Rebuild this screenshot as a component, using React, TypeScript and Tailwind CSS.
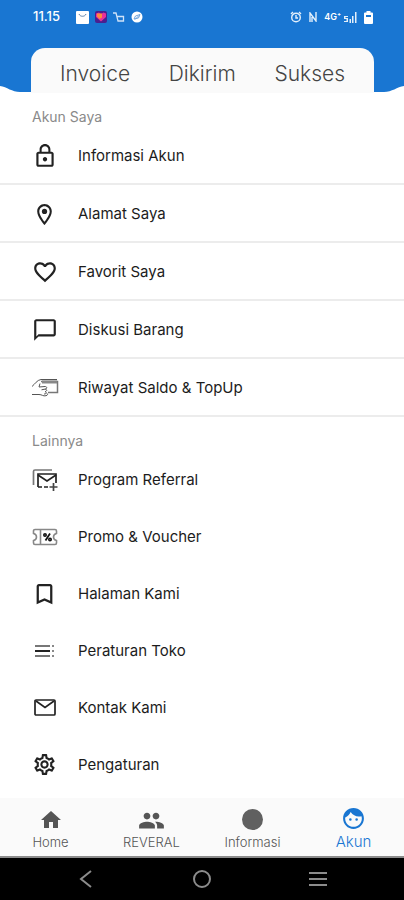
import type { ReactNode } from 'react';
import {
  MdBookmarkBorder,
  MdChatBubbleOutline,
  MdFace,
  MdFavoriteBorder,
  MdHome,
  MdLockOutline,
  MdOutlineLocationOn,
  MdOutlineSettings,
  MdPeople,
} from 'react-icons/md';

type Item = { label: string; icon: ReactNode };

function HandCardIcon() {
  return (
    <svg viewBox="0 0 28 20" className="w-7 h-5 shrink-0" fill="none" stroke="#555" strokeWidth="1">
      <path d="M10 3.500h16.500v11H17" stroke="#777" strokeWidth="1.500" />
      <path d="M11 4h15" stroke="#888" strokeWidth="3" />
      <path d="M1 8.500C4 6 6 2 10 1.500h16" />
      <path d="M9 5.500 8 9l6-.5c2 0 2.500 2 .5 2.500l-4 .8M14 11c2.500.5 2 2.500 0 2.500 2 .8 1.500 2.500-1 2.500M1 16.500h7c3 0 4 2 7 1.200 2-.5 2-2 .5-2.500" />
    </svg>
  );
}

function MailPlusIcon() {
  return (
    <svg viewBox="0 0 26 24" className="w-[26px] h-6 shrink-0" fill="none" stroke="#222" strokeWidth="1.700">
      <path d="M1.500 17V3.500a1.500 1.500 0 0 1 1.500-1.500H20" stroke="#777" />
      <path d="M6 19V6h18v9M6 19h4M12 19h4" />
      <path d="m6 7 9 6 9-6" />
      <path d="M21.500 15v8M17.500 19h8" stroke="#444" />
    </svg>
  );
}

function VoucherIcon() {
  return (
    <svg viewBox="0 0 26 18" className="w-[26px] h-[18px] shrink-0" fill="none" stroke="#888" strokeWidth="1.600">
      <path d="M3 1.500h20a1.500 1.500 0 0 1 1.500 1.500v2.500c-4 1-4 6 0 7V15a1.500 1.500 0 0 1-1.500 1.500H3A1.500 1.500 0 0 1 1.500 15v-2.500c4-1 4-6 0-7V3A1.500 1.500 0 0 1 3 1.500z" />
      <path d="M8.500 2v14" />
      <path d="m18 5.500-4.500 7" stroke="#111" strokeWidth="1.800" />
      <circle cx="13" cy="7" r="1.200" stroke="#111" />
      <circle cx="18" cy="11.500" r="1.200" stroke="#111" />
    </svg>
  );
}

function ListIcon() {
  return (
    <svg viewBox="0 0 20 14" className="w-5 h-[14px] shrink-0" fill="none" strokeWidth="2">
      <path d="M0 2h15M0 12h15" stroke="#777" />
      <path d="M0 7h15" stroke="#222" />
      <path d="M17 2h2M17 7h2M17 12h2" stroke="#888" />
    </svg>
  );
}

function EnvelopeIcon() {
  return (
    <svg viewBox="0 0 22 17" className="w-[22px] h-[17px] shrink-0" fill="none" stroke="#222" strokeWidth="1.700">
      <rect x="1" y="1" width="20" height="15" rx="1" />
      <path d="m2 2 9 6.500L20 2" />
    </svg>
  );
}

const account: Item[] = [
  { label: 'Informasi Akun', icon: <MdLockOutline size={26} /> },
  { label: 'Alamat Saya', icon: <MdOutlineLocationOn size={25} /> },
  { label: 'Favorit Saya', icon: <MdFavoriteBorder size={26} /> },
  { label: 'Diskusi Barang', icon: <MdChatBubbleOutline size={26} /> },
  { label: 'Riwayat Saldo & TopUp', icon: <HandCardIcon /> },
];

const others: Item[] = [
  { label: 'Program Referral', icon: <MailPlusIcon /> },
  { label: 'Promo & Voucher', icon: <VoucherIcon /> },
  { label: 'Halaman Kami', icon: <MdBookmarkBorder size={28} /> },
  { label: 'Peraturan Toko', icon: <ListIcon /> },
  { label: 'Kontak Kami', icon: <EnvelopeIcon /> },
  { label: 'Pengaturan', icon: <MdOutlineSettings size={25} /> },
];

function StatusBar() {
  return (
    <div className="flex items-center justify-between h-[34px] pl-[33px] pr-[31px] text-white">
      <div className="flex items-center">
        <span className="text-[13px] font-medium">11.15</span>
        <div className="flex items-center gap-[6px] ml-4">
          <svg viewBox="0 0 13 13" className="w-[13px] h-[13px]">
            <rect width="13" height="13" rx="1" fill="#fff" />
            <path d="M3 3c1 3 6 3 7 0" fill="none" stroke="#5b7fa8" />
          </svg>
          <svg viewBox="0 0 12 12" className="w-3 h-3">
            <rect width="12" height="12" rx="2" fill="#4a1f8f" />
            <path d="M6 10.500 1 6V2.500L4 1.500l2 1.500L8.500 1.500l2.500 1V6z" fill="#e8309a" />
            <path d="M2 2.500h5v4L4.500 8 2 5.500z" fill="#ff8a3d" />
          </svg>
          <svg viewBox="0 0 12 12" className="w-3 h-3" fill="none" stroke="#cfe2f8" strokeWidth="1.300">
            <path d="M0 2h3l2 8h5.500V5.500H4.500" />
          </svg>
          <svg viewBox="0 0 12 12" className="w-3 h-3">
            <circle cx="6" cy="6" r="5.500" fill="#fff" />
            <path d="m3 8 1.500-3L9 3.500 7.500 7zM4 8.500l4-4" fill="none" stroke="#6fa5de" />
          </svg>
        </div>
      </div>
      <div className="flex items-center gap-[7px]">
        <svg viewBox="0 0 12 12" className="w-3 h-3" fill="none" stroke="#e3effb" strokeWidth="1.400">
          <circle cx="6" cy="6.500" r="4.300" />
          <path d="M6 4v3h2M1 3l2-2M11 3 9 1" />
        </svg>
        <svg viewBox="0 0 8 10" className="w-2 h-[10px]" fill="none" stroke="#e3effb" strokeWidth="1.400">
          <path d="M1 10V1l6 8V0M3 10V5" />
        </svg>
        <span className="text-[9px] font-semibold">4G⁺</span>
        <svg viewBox="0 0 13 11" className="w-[13px] h-[11px] -ml-1" fill="#e3effb">
          <path d="M0 4h4v1H1.500v1H4v4H0V9h2.500V7H0zM5.500 7H7v4H5.500zM8 4h1.500v7H8zM11 0h1.500v11H11z" />
        </svg>
        <svg viewBox="0 0 9 13" className="w-[9px] h-[13px]">
          <path d="M2.500 0h4v1.500H8A1 1 0 0 1 9 2.500V12a1 1 0 0 1-1 1H1a1 1 0 0 1-1-1V2.500a1 1 0 0 1 1-1h1.500z" fill="#fff" />
          <path d="M2 4h5v2H2z" fill="#1976d2" />
        </svg>
      </div>
    </div>
  );
}

function Row({ item, divided }: { item: Item; divided?: boolean }) {
  return (
    <li>
      <button
        className={
          divided
            ? 'flex items-center w-full h-[58px] pt-[2px] pl-[31px] text-left border-b-2 border-[#ececec]'
            : 'flex items-center w-full h-[57px] pl-[31px] text-left'
        }
      >
        <span className="flex items-center justify-center w-[27px] text-[#222]">{item.icon}</span>
        <span className="ml-5 text-[15px] leading-5 text-[#1c1c1c]">{item.label}</span>
      </button>
    </li>
  );
}

export default function App() {
  return (
    <div className="flex flex-col min-h-screen bg-white font-[Inter,'Liberation_Sans',sans-serif]">
      <header className="relative bg-[#1976d2]">
        <StatusBar />
        {/* Curved lower corners of the header */}
        <svg viewBox="0 0 31 8" className="absolute left-0 bottom-0 w-[31px] h-2">
          <path d="M0 1c7 1 12 6 20 6h11v1H0z" fill="#fff" />
        </svg>
        <svg viewBox="0 0 31 8" className="absolute right-0 bottom-0 w-[31px] h-2">
          <path d="M31 1c-7 1-12 6-20 6H0v1h31z" fill="#fff" />
        </svg>
        <nav className="relative flex items-center justify-between h-[45px] mt-[14px] ml-[31px] mr-[30px] px-[29px] pt-[6px] rounded-t-[14px] bg-[#fafafa] text-[21px] leading-7 font-light text-[#444]">
          <a href="#invoice">Invoice</a>
          <a href="#dikirim">Dikirim</a>
          <a href="#sukses">Sukses</a>
        </nav>
      </header>

      <main className="flex-1">
        <section>
          <h2 className="pt-[14px] pl-8 text-sm leading-5 text-[#8a8a8a]">Akun Saya</h2>
          <ul>
            {account.map((item) => (
              <Row key={item.label} item={item} divided />
            ))}
          </ul>
        </section>
        <section>
          <h2 className="pt-[14px] pl-8 text-sm leading-5 text-[#8a8a8a]">Lainnya</h2>
          <ul>
            {others.map((item) => (
              <Row key={item.label} item={item} />
            ))}
          </ul>
        </section>
      </main>

      <footer>
        <nav className="grid grid-cols-4 h-[60px] bg-[#fafafa] border-b-2 border-[#8c8c8c] text-[13px] leading-4 font-light text-[#555]">
          <a href="#home" className="flex flex-col items-center pt-[10px]">
            <MdHome size={24} className="text-[#555]" />
            <span className="mt-[2px]">Home</span>
          </a>
          <a href="#reveral" className="flex flex-col items-center pt-[9px]">
            <MdPeople size={27} className="text-[#555]" />
            <span>REVERAL</span>
          </a>
          <a href="#informasi" className="flex flex-col items-center pt-[11px]">
            <span className="size-[21px] rounded-full bg-[#606060]" />
            <span className="mt-1">Informasi</span>
          </a>
          <a href="#akun" className="flex flex-col items-center pt-2 text-[15px] leading-4 text-[#1976d2]">
            <MdFace size={25} />
            <span className="mt-[3px]">Akun</span>
          </a>
        </nav>
        <div className="flex items-center justify-between h-[42px] pl-[78px] pr-[77px] bg-black text-[#8c8c8c]">
          <button aria-label="Back">
            <svg viewBox="0 0 16 18" className="w-4 h-[18px]" fill="none" stroke="currentColor" strokeWidth="2">
              <path d="M13 1 3 9l10 8" />
            </svg>
          </button>
          <button aria-label="Home">
            <svg viewBox="0 0 20 20" className="size-5" fill="none" stroke="currentColor" strokeWidth="2">
              <circle cx="10" cy="10" r="8" />
            </svg>
          </button>
          <button aria-label="Recents">
            <svg viewBox="0 0 18 16" className="w-[18px] h-4" fill="none" stroke="currentColor" strokeWidth="2">
              <path d="M0 2h18M0 8h18M0 14h18" />
            </svg>
          </button>
        </div>
      </footer>
    </div>
  );
}
